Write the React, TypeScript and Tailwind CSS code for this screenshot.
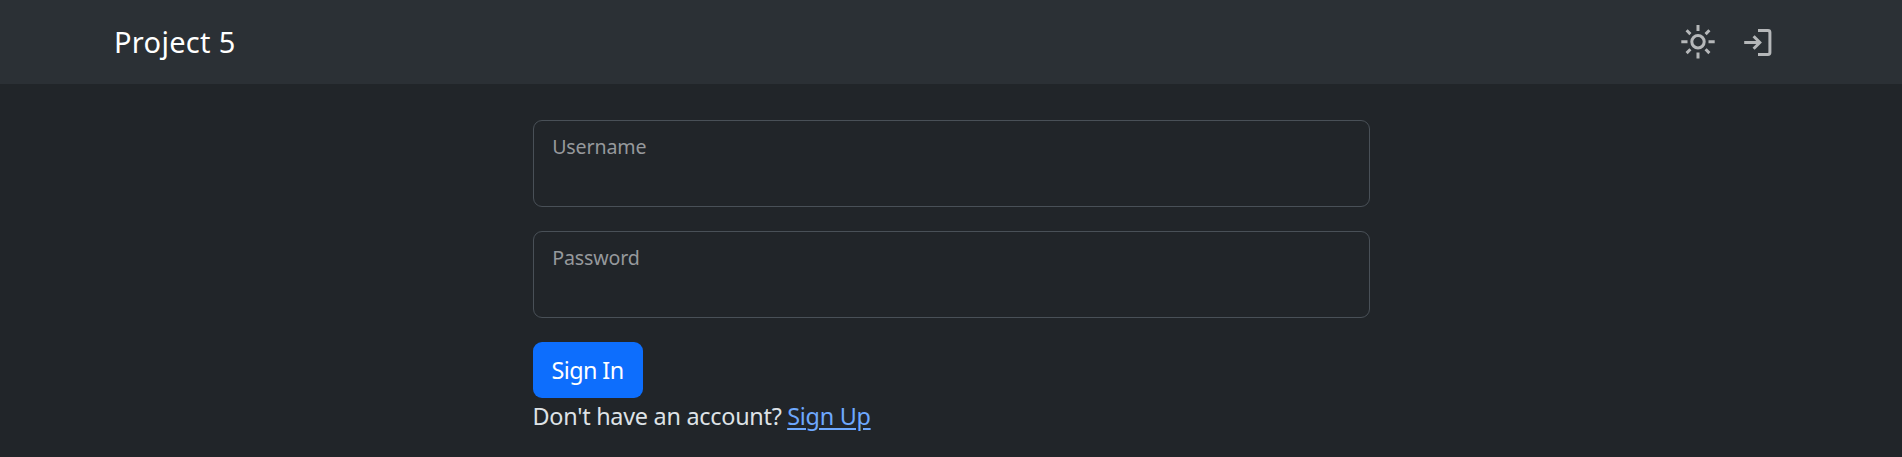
import React from "react";

function SunIcon() {
  return (
    <svg className="h-9 w-9" viewBox="0 0.3 36 36" fill="none" stroke="currentColor" strokeWidth="3">
      <circle cx="18" cy="18" r="6.2" />
      <path d="M18 1.3v6M18 28.7v6M1.3 18h6.2M28.5 18h6.2M6.6 6.6l3.8 3.8M25.6 25.6l3.8 3.8M29.4 6.6l-3.8 3.8M10.4 25.6l-3.8 3.8" />
    </svg>
  );
}

function LoginIcon() {
  return (
    <svg className="h-9 w-9" viewBox="0 0 36 36" fill="none" stroke="currentColor" strokeWidth="3">
      <path d="M18 6.5h10q1.9 0 1.9 1.9v20.2q0 1.9-1.9 1.9H18" />
      <path d="M4.2 18.5h15.3M13.6 12.3l6.2 6.2-6.2 6.2" />
    </svg>
  );
}

function Field({ label, type }: { label: string; type: string }) {
  return (
    <label className="mb-6 block h-[87px] rounded-[9px] border border-[#495057]">
      <span className="block pt-[12px] pl-[18.7px] text-[19.6px] leading-[27px] tracking-[-0.15px] text-[#96999c]">
        {label}
      </span>
      <input
        type={type}
        className="block h-[44px] w-full bg-transparent px-[18px] text-[24px] text-[#dee2e6] outline-none"
      />
    </label>
  );
}

export default function App() {
  return (
    <div className="min-h-screen bg-[#212529] font-['Noto_Sans',sans-serif] text-[#dee2e6]">
      <header className="flex h-[84px] items-center justify-between bg-[#2b3035] pr-[126px] pl-[114px]">
        <a href="#" className="pb-[2px] text-[29px] leading-[45px] tracking-[0.3px] text-white">Project 5</a>
        <nav className="flex gap-6 text-[#b5b7b9]">
          <a href="#" aria-label="Theme"><SunIcon /></a>
          <a href="#" aria-label="Sign in"><LoginIcon /></a>
        </nav>
      </header>
      <main className="mx-auto w-[837px] pt-9">
        <form>
          <Field label="Username" type="text" />
          <Field label="Password" type="password" />
          <button
            type="button"
            className="block h-14 w-[110px] rounded-[9px] bg-[#0d6efd] text-[23.4px] leading-9 tracking-[-0.6px] text-white"
          >
            Sign In
          </button>
        </form>
        <p className="flex gap-[5.5px] text-[23.4px] leading-9 tracking-[-0.26px] whitespace-nowrap">
          <span>Don't have an account?</span>
          <a href="#" className="text-[#6ea8fe] underline decoration-2 underline-offset-[3px]">Sign Up</a>
        </p>
      </main>
    </div>
  );
}
